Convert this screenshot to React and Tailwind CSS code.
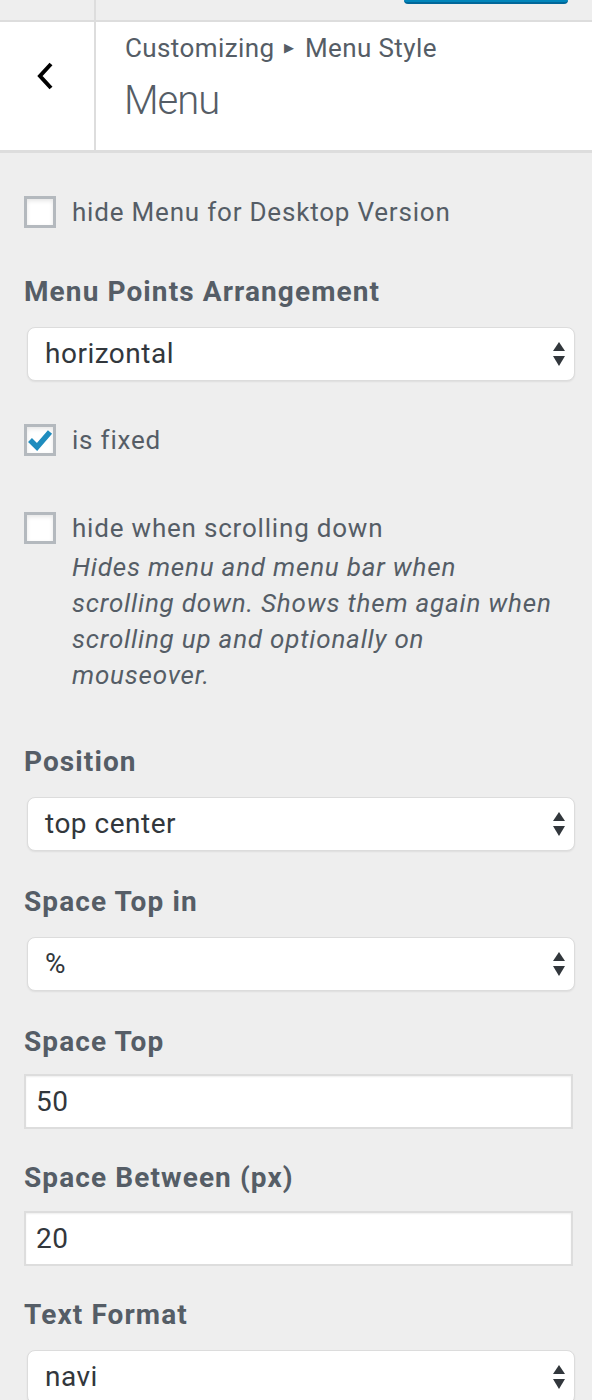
import React from "react";

const font = { fontFamily: "Roboto, 'Noto Sans', 'Liberation Sans', sans-serif" };

function Arrows() {
  return (
    <svg width="14" height="26" viewBox="0 0 14 26" className="absolute right-[8px] top-1/2 -translate-y-1/2">
      <path d="M7 1 L13 10 L1 10 Z" fill="#32373c" />
      <path d="M1 15 L13 15 L7 25 Z" fill="#32373c" />
    </svg>
  );
}

function Select({ value }) {
  return (
    <div className="relative ml-[3px] h-[54px] w-[548px] rounded-[8px] border border-[#dcdcdc] bg-white shadow-[0_1px_2px_rgba(0,0,0,0.07)] flex items-center pl-[17px]">
      <span className="text-[28px] text-[#32373c] leading-none tracking-[0.5px]">{value}</span>
      <Arrows />
    </div>
  );
}

function Input({ value }) {
  return (
    <div className="h-[55px] w-[549px] border-2 border-[#dddddd] bg-white flex items-center pl-[10px] shadow-[inset_0_1px_2px_rgba(0,0,0,0.07)]">
      <span className="text-[28px] text-[#32373c] leading-none tracking-[0.5px]">{value}</span>
    </div>
  );
}

function Checkbox({ checked }) {
  return (
    <div className="relative h-[32px] w-[32px] shrink-0 border-[3px] border-[#b4b9be] bg-white shadow-[inset_0_2px_4px_rgba(0,0,0,0.1)]">
      {checked && (
        <svg width="26" height="26" viewBox="0 0 26 26" className="absolute left-0 top-0">
          <path d="M3 13 L10 20 L23 5" fill="none" stroke="#1e8cbe" strokeWidth="5.5" strokeLinejoin="miter" />
        </svg>
      )}
    </div>
  );
}

function Label({ children, className = "" }) {
  return (
    <div className={"text-[28px] font-bold leading-[36px] tracking-[1.1px] text-[#555d66] " + className}>{children}</div>
  );
}

export default function App() {
  return (
    <div style={font} className="w-[592px] min-h-[1400px] bg-[#eeeeee] overflow-hidden">
      {/* top toolbar */}
      <div className="flex h-[22px] border-b-2 border-[#dddddd]">
        <div className="w-[94px]" />
        <div className="w-[2px] bg-[#dddddd]" />
        <div className="flex-1 relative">
          <div className="absolute left-[308px] top-0 h-[4px] w-[164px] rounded-b-[6px] bg-[#0085ba] border-b-2 border-[#006799]" />
        </div>
      </div>

      {/* header */}
      <div className="flex h-[131px] bg-white border-b-[3px] border-[#dddddd]">
        <div className="w-[94px] flex justify-center pt-[40px]">
          <svg width="20" height="28" viewBox="0 0 20 28" className="-ml-[3px]">
            <path d="M15 2 L4 14 L15 26" fill="none" stroke="#000" strokeWidth="4" />
          </svg>
        </div>
        <div className="w-[2px] bg-[#dddddd]" />
        <div className="pl-[29px] pt-[9px]">
          <div className="text-[26px] leading-[34px] tracking-[0.4px] text-[#555d66] flex items-center">
            Customizing
            <span className="mx-[10px] text-[13px] text-[#555d66]">▶</span>
            Menu Style
          </div>
          <div className="mt-[11px] text-[40px] font-light leading-[50px] text-[#555d66] -ml-[1px] tracking-[-1px]">Menu</div>
        </div>
      </div>

      {/* controls */}
      <div className="pl-[24px] pt-[43px] text-[#555d66]">
        <div className="flex items-center gap-[16px]">
          <Checkbox />
          <span className="text-[26px] leading-[32px] tracking-[0.8px]">hide Menu for Desktop Version</span>
        </div>

        <Label className="mt-[46px]">Menu Points Arrangement</Label>
        <div className="mt-[17px]">
          <Select value="horizontal" />
        </div>

        <div className="mt-[43px] flex items-center gap-[16px]">
          <Checkbox checked />
          <span className="text-[26px] leading-[32px] tracking-[0.8px]">is fixed</span>
        </div>

        <div className="mt-[54px] flex gap-[16px]">
          <div className="pt-[2px]">
            <Checkbox />
          </div>
          <div className="tracking-[0.8px]">
            <div className="text-[26px] leading-[36px]">hide when scrolling down</div>
            <div className="mt-[3px] text-[26px] italic leading-[36px]">
              Hides menu and menu bar when<br />
              scrolling down. Shows them again when<br />
              scrolling up and optionally on<br />
              mouseover.
            </div>
          </div>
        </div>

        <Label className="mt-[51px]">Position</Label>
        <div className="mt-[17px]">
          <Select value="top center" />
        </div>

        <Label className="mt-[33px]">Space Top in</Label>
        <div className="mt-[17px]">
          <Select value="%" />
        </div>

        <Label className="mt-[33px]">Space Top</Label>
        <div className="mt-[14px]">
          <Input value="50" />
        </div>

        <Label className="mt-[31px]">Space Between (px)</Label>
        <div className="mt-[15px]">
          <Input value="20" />
        </div>

        <Label className="mt-[31px]">Text Format</Label>
        <div className="mt-[17px]">
          <Select value="navi" />
        </div>
      </div>
    </div>
  );
}
